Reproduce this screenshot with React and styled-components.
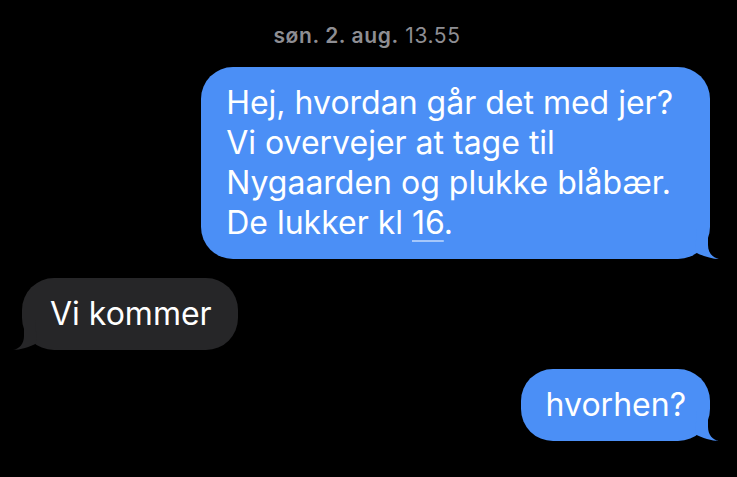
import React from "react";
import styled, { createGlobalStyle } from "styled-components";

const Global = createGlobalStyle`
  html, body { margin: 0; padding: 0; background: #000; }
  body { width: 737px; height: 477px; overflow: hidden; font-family: Inter, "Noto Sans", sans-serif; -webkit-font-smoothing: antialiased; }
`;

const Thread = styled.div`
  display: flex;
  flex-direction: column;
  padding: 24px 27px 0 22px;
  gap: 19px;
`;

const Stamp = styled.div`
  text-align: center;
  font-size: 21px;
  letter-spacing: 0.6px;
  line-height: 24px;
  color: #8e8e93;
  padding-left: 2px;
`;

const StampDay = styled.span`
  font-weight: 600;
`;

const Row = styled.div`
  display: flex;
  justify-content: ${(p) => (p.$me ? "flex-end" : "flex-start")};
`;

const Bubble = styled.div`
  position: relative;
  background: ${(p) => (p.$me ? "#4b8ff6" : "#262628")};
  color: #fff;
  font-size: 32px;
  line-height: 40px;
  padding: 16px ${(p) => p.$pr}px 16px ${(p) => p.$pl}px;
  border-radius: 32px;
  white-space: pre-line;
`;

const TailSvg = styled.svg`
  position: absolute;
  bottom: 0;
  ${(p) => (p.$me ? "right: -12px;" : "left: -12px; transform: scaleX(-1);")}
  width: 26px;
  height: 30px;
  overflow: visible;
`;

const Num = styled.span`
  text-decoration: underline;
  text-decoration-color: rgba(255, 255, 255, 0.5);
  text-decoration-thickness: 1.5px;
  text-underline-offset: 6px;
`;

function Tail({ me, color }) {
  return (
    <TailSvg $me={me} viewBox="0 0 26 30">
      <path
        d="M1 0 L12 0 L12 16 C12 24 17 29 23 30 C16 30 6 27 -1 23 L1 0 Z"
        fill={color}
      />
    </TailSvg>
  );
}

export default function App() {
  return (
    <>
      <Global />
      <Thread>
        <Stamp>
          <StampDay>søn. 2. aug.</StampDay> 13.55
        </Stamp>
        <Row $me>
          <Bubble $me $pl={25} $pr={37}>
            {"Hej, hvordan går det med jer?\nVi overvejer at tage til\nNygaarden og plukke blåbær.\nDe lukker kl "}
            <Num>16</Num>.
            <Tail me color="#4b8ff6" />
          </Bubble>
        </Row>
        <Row>
          <Bubble $pl={28} $pr={26}>
            Vi kommer
            <Tail color="#262628" />
          </Bubble>
        </Row>
        <Row $me>
          <Bubble $me $pl={25} $pr={24}>
            hvorhen?
            <Tail me color="#4b8ff6" />
          </Bubble>
        </Row>
      </Thread>
    </>
  );
}
